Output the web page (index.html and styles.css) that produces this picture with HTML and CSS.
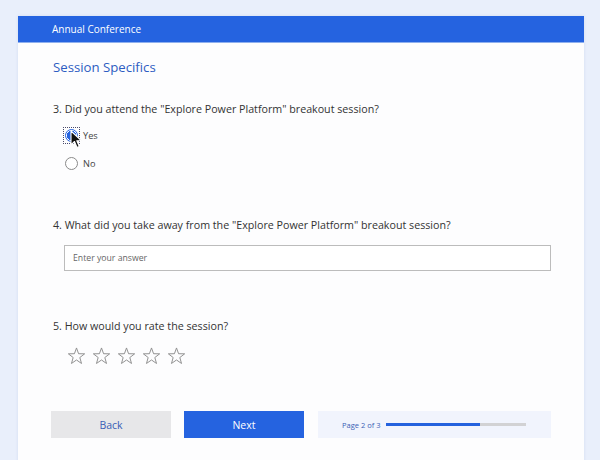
FILE: index.html
```html
<!DOCTYPE html>
<html lang="en">
<head>
<meta charset="utf-8">
<title>Annual Conference</title>
<link rel="stylesheet" href="styles.css">
</head>
<body>
<div class="card">
  <div class="header">Annual Conference</div>
  <div class="content">
    <h1 class="section-title">Session Specifics</h1>

    <div class="question q3">
      <div class="q-text">3. Did you attend the "Explore Power Platform" breakout session?</div>
      <div class="options">
        <div class="option">
          <span class="radio-wrap focused">
            <span class="radio checked"></span>
            <svg class="cursor" width="13" height="19" viewBox="0 0 13 19">
              <path d="M1 1 L1 15 L4.5 11.5 L7 17.5 L9.3 16.5 L6.8 10.8 L11.5 10.8 Z" fill="#111" stroke="#fff" stroke-width="1.1" stroke-linejoin="round"/>
            </svg>
          </span>
          <span class="opt-label">Yes</span>
        </div>
        <div class="option">
          <span class="radio-wrap">
            <span class="radio"></span>
          </span>
          <span class="opt-label">No</span>
        </div>
      </div>
    </div>

    <div class="question q4">
      <div class="q-text">4. What did you take away from the "Explore Power Platform" breakout session?</div>
      <div class="input">Enter your answer</div>
    </div>

    <div class="question q5">
      <div class="q-text">5. How would you rate the session?</div>
      <div class="stars">
        <svg class="star" viewBox="0 0 20 19"><path d="M10 1 L12.2 7.1 L18.6 7.2 L13.5 11.1 L15.3 17.4 L10 13.7 L4.7 17.4 L6.5 11.1 L1.4 7.2 L7.8 7.1 Z"/></svg>
        <svg class="star" viewBox="0 0 20 19"><path d="M10 1 L12.2 7.1 L18.6 7.2 L13.5 11.1 L15.3 17.4 L10 13.7 L4.7 17.4 L6.5 11.1 L1.4 7.2 L7.8 7.1 Z"/></svg>
        <svg class="star" viewBox="0 0 20 19"><path d="M10 1 L12.2 7.1 L18.6 7.2 L13.5 11.1 L15.3 17.4 L10 13.7 L4.7 17.4 L6.5 11.1 L1.4 7.2 L7.8 7.1 Z"/></svg>
        <svg class="star" viewBox="0 0 20 19"><path d="M10 1 L12.2 7.1 L18.6 7.2 L13.5 11.1 L15.3 17.4 L10 13.7 L4.7 17.4 L6.5 11.1 L1.4 7.2 L7.8 7.1 Z"/></svg>
        <svg class="star" viewBox="0 0 20 19"><path d="M10 1 L12.2 7.1 L18.6 7.2 L13.5 11.1 L15.3 17.4 L10 13.7 L4.7 17.4 L6.5 11.1 L1.4 7.2 L7.8 7.1 Z"/></svg>
      </div>
    </div>

    <div class="footer">
      <button class="btn btn-back">Back</button>
      <button class="btn btn-next">Next</button>
      <div class="progress">
        <span class="progress-label">Page 2 of 3</span>
        <span class="track"><span class="fill" style="width:67%"></span></span>
      </div>
    </div>
  </div>
</div>
</body>
</html>
```

FILE: styles.css
```css
* { box-sizing: border-box; }
html, body { margin: 0; padding: 0; }
body {
  background: #e9effb;
  font-family: "Open Sans", "Noto Sans", "Liberation Sans", sans-serif;
  color: #333;
  height: 460px;
  overflow: hidden;
}
.card {
  margin: 16px 16px 0 18px;
  width: 566px;
  height: 460px;
  background: #fdfdfe;
  box-shadow: 0 0 3px rgba(60, 90, 160, 0.12);
}
.header {
  height: 27px;
  background: #2563e0;
  color: #fff;
  font-size: 10px;
  line-height: 27px;
  padding-left: 34px;
  border-bottom: 1px solid #8fb0ee;
}
.content {
  padding-left: 35px;
  padding-right: 33px;
}
.section-title {
  margin: 0;
  padding-top: 14px;
  font-size: 13.2px;
  font-weight: normal;
  line-height: 20px;
  color: #2d5cc2;
}
.q-text {
  font-size: 10.7px;
  line-height: 18px;
  color: #333;
}
.q3 { margin-top: 23px; }
.options {
  margin-top: 10px;
  display: flex;
  flex-direction: column;
  gap: 13px;
  padding-left: 11px;
}
.option {
  display: flex;
  align-items: center;
  height: 15px;
}
.radio-wrap {
  position: relative;
  width: 15px;
  height: 15px;
  display: flex;
  align-items: center;
  justify-content: center;
  margin-right: 4px;
}
.radio-wrap.focused {
  outline: 1px dotted #4a4a6a;
}
.radio {
  width: 13px;
  height: 13px;
  border-radius: 50%;
  border: 1px solid #8a8a8a;
  background: #fff;
}
.radio.checked {
  border: 1px solid #2563e0;
  background: radial-gradient(circle, #2563e0 0 4.5px, #fff 5px);
}
.cursor {
  position: absolute;
  left: 6px;
  top: 2px;
}
.opt-label {
  font-size: 9.2px;
  color: #444;
}
.q4 { margin-top: 45px; }
.input {
  margin: 11px 0 0 11px;
  width: 487px;
  height: 26px;
  border: 1px solid #bcbcbc;
  background: #fff;
  font-size: 8.7px;
  color: #666;
  line-height: 24px;
  padding-left: 8px;
}
.q5 { margin-top: 46px; }
.stars {
  margin-top: 12px;
  padding-left: 14px;
  display: flex;
  gap: 6px;
}
.star {
  width: 19px;
  height: 18px;
  fill: none;
  stroke: #8c8c8c;
  stroke-width: 1;
  stroke-linejoin: miter;
}
.footer {
  margin-top: 46px;
  margin-left: -2px;
  display: flex;
  gap: 13px;
  height: 27px;
}
.btn {
  width: 120px;
  height: 27px;
  border: none;
  font-family: inherit;
  font-size: 10.5px;
  padding: 0;
}
.btn-back {
  background: #e7e7e9;
  color: #3a5fb6;
}
.btn-next {
  background: #2563e0;
  color: #fff;
}
.progress {
  width: 233px;
  margin-left: 1px;
  background: #f1f4fd;
  display: flex;
  align-items: center;
  padding-left: 24px;
  gap: 6px;
}
.progress-label {
  font-size: 7.5px;
  color: #3a5fb6;
}
.track {
  width: 140px;
  height: 3px;
  background: #d2d2d4;
  display: block;
}
.fill {
  display: block;
  height: 3px;
  background: #2462de;
}
```
